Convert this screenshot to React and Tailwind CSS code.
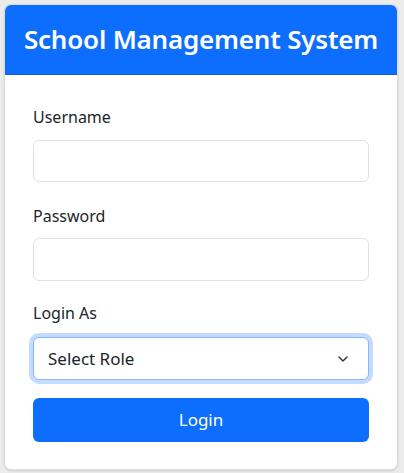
import { ChevronDown } from 'lucide-react';

export default function App() {
  return (
    <div
      className="min-h-[473px] w-[404px] bg-[#ececec] pt-1 pl-1"
      style={{ fontFamily: '"Noto Sans", "Open Sans", sans-serif' }}
    >
      <div className="w-[394px] overflow-hidden rounded-[7px] border border-[#dcdcdc] bg-white shadow-sm">
        {/* Header */}
        <div className="flex h-[70px] items-center justify-center border-b border-[#0b5ed7] bg-[#0d6efd]">
          <h1 className="text-[26px] font-semibold tracking-[-0.2px] text-white">School Management System</h1>
        </div>

        {/* Form */}
        <form className="px-[28px] pt-[30px] pb-[27px]">
          <label className="mb-[11px] block text-[16px] leading-6 text-[#212529]">Username</label>
          <input
            type="text"
            className="mb-[22px] block h-[42px] w-full rounded-[6px] border border-[#dee2e6] px-3 text-[16px] outline-none"
          />

          <label className="mb-[10px] block text-[16px] leading-6 text-[#212529]">Password</label>
          <input
            type="password"
            className="mb-[20px] block h-[43px] w-full rounded-[6px] border border-[#dee2e6] px-3 text-[16px] outline-none"
          />

          <label className="mb-[12px] block text-[16px] leading-6 text-[#212529]">Login As</label>
          <div className="relative mb-[18px] flex h-[43px] w-full items-center rounded-[6px] border border-[#86b7fe] bg-white pl-[14px] pr-3 ring-4 ring-[#0d6efd]/25">
            <span className="flex-1 text-[17px] text-[#212529]">Select Role</span>
            <ChevronDown className="mr-[5px] h-[16px] w-[16px] text-[#343a40]" strokeWidth={2.25} />
          </div>

          <button
            type="button"
            className="block h-[44px] w-full rounded-[6px] bg-[#0d6efd] text-[17px] text-white"
          >
            Login
          </button>
        </form>
      </div>
    </div>
  );
}
